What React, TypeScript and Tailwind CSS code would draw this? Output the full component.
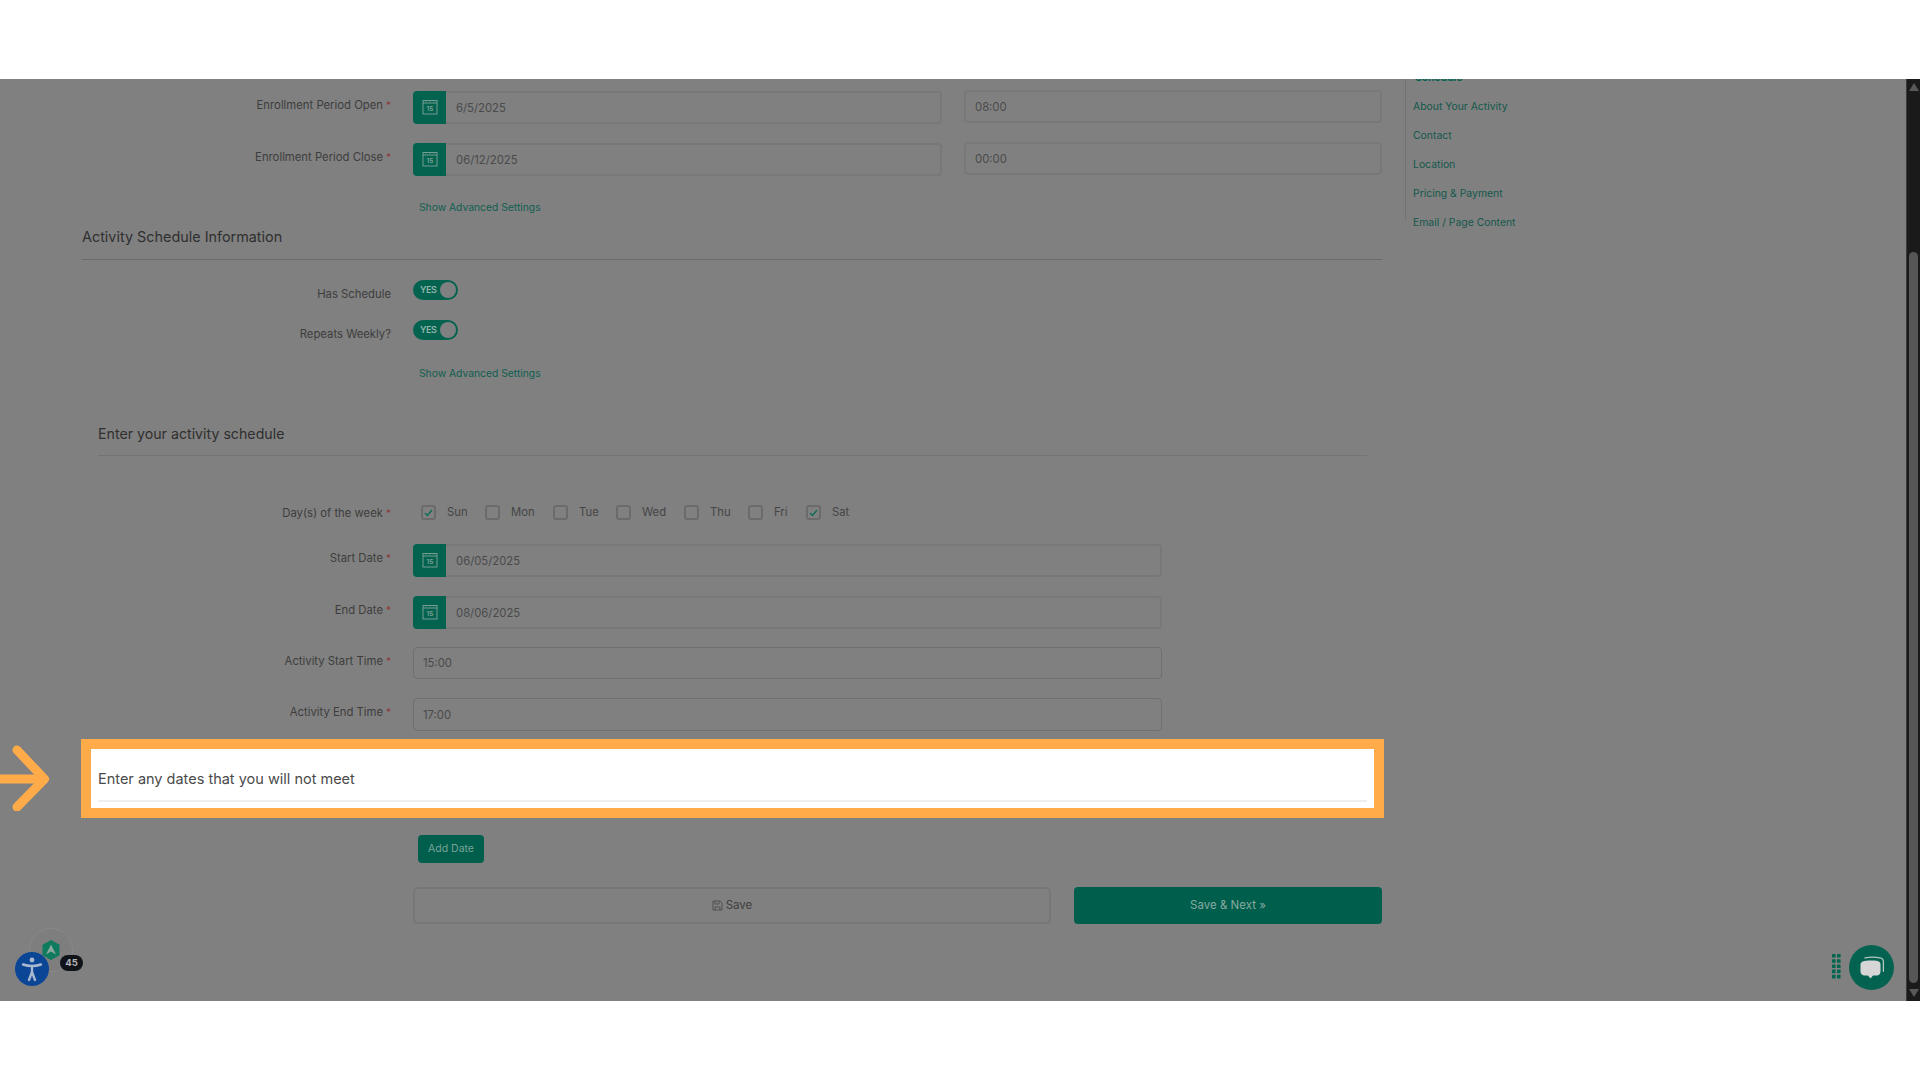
import React from "react";

const CalendarIcon = () => (
  <svg className="-mt-[2px]" width="16" height="16" viewBox="0 0 16 16" fill="none" stroke="#7fa398" strokeWidth="0.9">
    <rect x="1" y="1.5" width="14" height="13.5" />
    <line x1="1" y1="4" x2="15" y2="4" />
    <line x1="4" y1="1" x2="4" y2="2.5" />
    <line x1="8" y1="1" x2="8" y2="2.5" />
    <line x1="12" y1="1" x2="12" y2="2.5" />
    <text x="8" y="12" textAnchor="middle" fontSize="6.5" fontWeight="600" fill="#7fa398" stroke="none" fontFamily="Inter, sans-serif">15</text>
  </svg>
);

const Label = ({ text, required = true, top = true }: { text: string; required?: boolean; top?: boolean }) => (
  <div className={`w-[309px] shrink-0 mr-[22px] h-[16px] text-right text-[11.3px] leading-[16px] text-[#3d3d3d] ${top ? "mt-[6px]" : ""}`}>
    {text}
    {required && <span className="ml-[3px] text-[#8a3a3a] text-[10px]">*</span>}
  </div>
);

const DateInput = ({ value, width }: { value: string; width: string }) => (
  <div className={`flex h-[33px] ${width}`}>
    <div className="w-[33px] shrink-0 bg-[#03634f] rounded-l-[4px] flex items-center justify-center">
      <CalendarIcon />
    </div>
    <div className="flex-1 border-2 border-l-0 border-[#787878] rounded-r-[4px] flex items-center pl-[10px] pt-[1px] text-[11.3px] text-[#4a4a4a]">
      {value}
    </div>
  </div>
);

const TimeInput = ({ value, width, height, border }: { value: string; width: string; height: string; border: string }) => (
  <div className={`${width} ${height} ${border} rounded-[4px] flex items-center pl-[9px] pt-[1px] text-[11.3px] text-[#4a4a4a]`}>
    {value}
  </div>
);

const Toggle = () => (
  <div className="w-[45px] h-[20px] rounded-full bg-[#03634f] flex items-center justify-between pl-[7px] pr-[2px]">
    <span className="text-[9px] font-semibold tracking-[-0.4px] text-[#94b5ab]">YES</span>
    <span className="w-[16px] h-[16px] rounded-full bg-[#808080] block" />
  </div>
);

const Advanced = ({ cls }: { cls: string }) => (
  <div className={`${cls} ml-[337px] h-[16px] leading-[16px] text-[10.3px] text-[#0f5f50]`}>Show Advanced Settings</div>
);

const Day = ({ label, checked, gap, width }: { label: string; checked?: boolean; gap: string; width: string }) => (
  <div className={`flex items-center ${gap}`}>
    <div className="w-[15px] h-[15px] border-2 border-[#6b6b6b] rounded-[3px] flex items-center justify-center shrink-0">
      {checked && (
        <svg width="11" height="11" viewBox="0 0 11 11" fill="none" stroke="#0b6b57" strokeWidth="1.4">
          <path d="M2 6l2.5 2.5L9 3" />
        </svg>
      )}
    </div>
    <div className={`ml-[11px] -mt-[1px] ${width} text-[11.3px] leading-[16px] text-[#454545]`}>{label}</div>
  </div>
);

const Triangle = ({ up }: { up: boolean }) => (
  <svg width="10" height="8" viewBox="0 0 10 8" fill="#585858">
    {up ? <path d="M5 0l5 8H0z" /> : <path d="M0 0h10L5 8z" />}
  </svg>
);

const links = ["About Your Activity", "Contact", "Location", "Pricing & Payment", "Email / Page Content"];

const inputBorder = "border-2 border-[#787878]";
const thinBorder = "border border-[#6f6f6f]";

export default function App() {
  return (
    <div className="w-[1920px] h-[1080px] flex flex-col overflow-hidden bg-white font-['Inter','Liberation_Sans',sans-serif]">
      <div className="h-[79px] bg-white shrink-0" />
      <main className="relative h-[922px] shrink-0 bg-[#808080] flex overflow-hidden">
        <section className="w-[1382px] shrink-0 pl-[82px] pt-[12px]">
          <div className="flex">
            <Label text="Enrollment Period Open" />
            <DateInput value="6/5/2025" width="w-[530px]" />
            <div className="ml-[22px] -mt-[1px]"><TimeInput value="08:00" width="w-[418px]" height="h-[33px]" border={inputBorder} /></div>
          </div>
          <div className="flex mt-[19px]">
            <Label text="Enrollment Period Close" />
            <DateInput value="06/12/2025" width="w-[530px]" />
            <div className="ml-[22px] -mt-[1px]"><TimeInput value="00:00" width="w-[418px]" height="h-[33px]" border={inputBorder} /></div>
          </div>
          <Advanced cls="mt-[23px]" />

          <h2 className="mt-[12px] h-[20px] leading-[20px] text-[14.4px] font-normal text-[#2f2f2f]">Activity Schedule Information</h2>
          <div className="mt-[12px] h-px bg-[#6b6b6b]" />

          <div className="flex mt-[20px] h-[20px]">
            <Label text="Has Schedule" required={false} />
            <Toggle />
          </div>
          <div className="flex mt-[20px] h-[20px]">
            <Label text="Repeats Weekly?" required={false} />
            <Toggle />
          </div>
          <Advanced cls="mt-[25px]" />

          <h3 className="mt-[43px] ml-[16px] h-[20px] leading-[20px] text-[14.2px] font-normal text-[#2f2f2f]">Enter your activity schedule</h3>
          <div className="mt-[11px] ml-[16px] mr-[15px] h-px bg-[#747474]" />

          <div className="flex mt-[49px] h-[15px]">
            <Label text="Day(s) of the week" top={false} />
            <div className="flex ml-[8px] h-[15px]">
              <Day label="Sun" checked gap="mr-[18px]" width="w-[20px]" />
              <Day label="Mon" gap="mr-[18px]" width="w-[24px]" />
              <Day label="Tue" gap="mr-[18px]" width="w-[19px]" />
              <Day label="Wed" gap="mr-[18px]" width="w-[24px]" />
              <Day label="Thu" gap="mr-[18px]" width="w-[20px]" />
              <Day label="Fri" gap="mr-[18px]" width="w-[14px]" />
              <Day label="Sat" checked gap="" width="w-[18px]" />
            </div>
          </div>

          <div className="flex mt-[24px]">
            <Label text="Start Date" />
            <DateInput value="06/05/2025" width="w-[749px]" />
          </div>
          <div className="flex mt-[19px]">
            <Label text="End Date" />
            <DateInput value="08/06/2025" width="w-[749px]" />
          </div>
          <div className="flex mt-[18px]">
            <Label text="Activity Start Time" />
            <TimeInput value="15:00" width="w-[749px]" height="h-[32px]" border={thinBorder} />
          </div>
          <div className="flex mt-[19px]">
            <Label text="Activity End Time" />
            <TimeInput value="17:00" width="w-[749px]" height="h-[33px]" border={thinBorder} />
          </div>

          <div className="mt-[8px] -ml-[1px] w-[1303px] border-[10px] border-[#ffab4a] bg-white px-[7px] pt-[20px] pb-[6px]">
            <div className="h-[20px] leading-[20px] text-[14.5px] text-[#4a4a4a]">Enter any dates that you will not meet</div>
            <div className="mt-[11px] h-[2px] bg-[#eeeeee]" />
          </div>

          <button className="block mt-[17px] ml-[336px] w-[66px] h-[28px] rounded-[4px] bg-[#005e4c] text-[10.5px] text-[#7aa297]">Add Date</button>

          <div className="flex mt-[24px] ml-[331px]">
            <button className="w-[638px] h-[37px] border-2 border-[#777777] rounded-[4px] flex items-center justify-center gap-[3px] text-[11.5px] text-[#3f3f3f]">
              <svg width="11" height="11" viewBox="0 0 11 11" fill="none" stroke="#505050" strokeWidth="1">
                <path d="M1 1h7l2 2v7H1z" />
                <path d="M3 1v3h4V1M3 10V7h5v3" />
              </svg>
              Save
            </button>
            <button className="ml-[23px] w-[308px] h-[37px] rounded-[4px] bg-[#005e4c] text-[11.5px] text-[#86a9a0]">Save &amp; Next »</button>
          </div>
        </section>

        <aside className="ml-[23px] w-[200px] h-[157px] -mt-[16px] border-l border-[#727272] pl-[7px] text-[10.4px] text-[#14584c]">
          <div className="h-[29px] leading-[29px] pl-[2px] font-bold text-[#00614e]">Schedule</div>
          {links.map((l) => (
            <div key={l} className="h-[29px] leading-[29px]">{l}</div>
          ))}
        </aside>

        <div className="ml-auto w-[14px] shrink-0 bg-[#1a1a1a] border-l border-[#3a3a3a] flex flex-col items-center pt-[4px] pb-[4px]">
          <Triangle up />
          <div className="w-[9px] h-[731px] mt-[161px] rounded-full bg-[#565656]" />
          <div className="mt-[6px]"><Triangle up={false} /></div>
        </div>

        <div className="absolute left-[29px] top-[849px] w-[44px] h-[44px] rounded-full border border-[#898989] bg-[#7e7e7e]" />
        <svg className="absolute left-[42px] top-[861px]" width="18" height="20" viewBox="0 0 18 20">
          <path d="M9 0l8.5 4.8v10.4L9 20 .5 15.2V4.8z" fill="#0f7a5e" />
          <path d="M9 4.5l5 10-5-3-5 3z" fill="#8aa89f" />
        </svg>
        <div className="absolute left-[60px] top-[876px] w-[23px] h-[16px] rounded-full bg-[#10131a] flex items-center justify-center text-[9.5px] font-bold text-[#b5b5b5]">45</div>
        <div className="absolute left-[15px] top-[873px] w-[34px] h-[34px] rounded-full bg-[#0b4595] flex items-center justify-center">
          <svg width="24" height="26" viewBox="0 0 24 26" fill="none" stroke="#a9b8cf" strokeWidth="2.4" strokeLinecap="round" strokeLinejoin="round">
            <circle cx="12" cy="4" r="2.4" fill="#a9b8cf" stroke="none" />
            <path d="M3 8.5c3 1 6 1.5 9 1.5s6-.5 9-1.5" />
            <path d="M12 10v6M12 16l-3 8M12 16l3 8" />
          </svg>
        </div>

        <svg className="absolute left-[1832px] top-[875px]" width="9" height="25" viewBox="0 0 9 25" fill="#00664f">
          {[0, 1, 2, 3, 4].map((r) => (
            <g key={r}>
              <rect x="0" y={r * 5.2} width="3.6" height="3.6" rx="0.6" />
              <rect x="5" y={r * 5.2} width="3.6" height="3.6" rx="0.6" />
            </g>
          ))}
        </svg>
        <div className="absolute left-[1849px] top-[866px] w-[45px] h-[45px] rounded-full bg-[#036350] flex items-center justify-center">
          <svg width="26" height="26" viewBox="0 0 26 26">
            <path d="M6 2.8c5-.8 10-.8 15 0 2 .3 3.4 1.8 3.4 4v9.5" fill="none" stroke="#b4c6c1" strokeWidth="1.3" strokeLinecap="round" />
            <path d="M5.5 6c4.5-.6 9.5-.6 13 0 2 .3 3 1.6 3 3.5v7c0 2.2-1.2 3.8-3.2 3.9H14l-2.5 3-2.5-3H5c-2 -.1-3.5-1.7-3.5-3.9v-7C1.500 7.600 3 6.300 5.500 6z" fill="#d6d6d6" />
          </svg>
        </div>

        <svg className="absolute left-0 top-[666px]" width="52" height="66" viewBox="0 0 52 66" fill="none" stroke="#ffab4a" strokeWidth="9" strokeLinecap="round" strokeLinejoin="round">
          <path d="M0 34h40" />
          <path d="M17 5l27.500 29-27.500 28" />
        </svg>
      </main>
      <div className="h-[79px] bg-white shrink-0" />
    </div>
  );
}
